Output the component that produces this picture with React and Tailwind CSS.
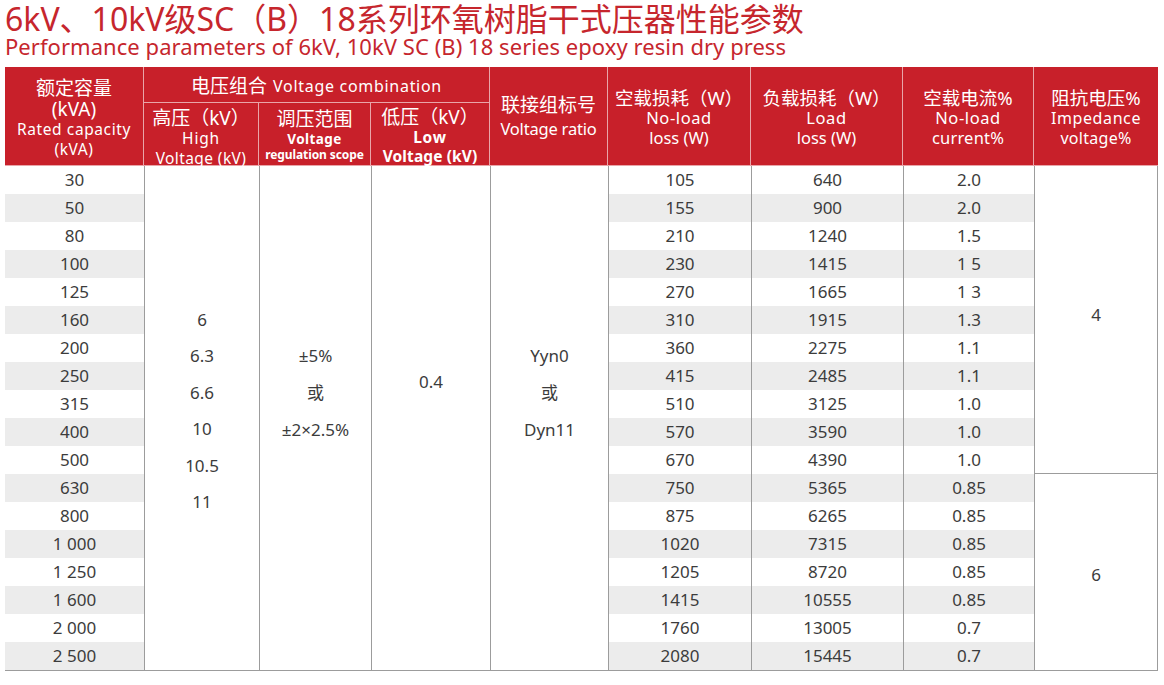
import React from 'react';

const rows = [
  ['30', '105', '640', '2.0'],
  ['50', '155', '900', '2.0'],
  ['80', '210', '1240', '1.5'],
  ['100', '230', '1415', '1 5'],
  ['125', '270', '1665', '1 3'],
  ['160', '310', '1915', '1.3'],
  ['200', '360', '2275', '1.1'],
  ['250', '415', '2485', '1.1'],
  ['315', '510', '3125', '1.0'],
  ['400', '570', '3590', '1.0'],
  ['500', '670', '4390', '1.0'],
  ['630', '750', '5365', '0.85'],
  ['800', '875', '6265', '0.85'],
  ['1 000', '1020', '7315', '0.85'],
  ['1 250', '1205', '8720', '0.85'],
  ['1 600', '1415', '10555', '0.85'],
  ['2 000', '1760', '13005', '0.7'],
  ['2 500', '2080', '15445', '0.7'],
];

const cjk = { fontFamily: '"Noto Sans", "Noto Sans CJK SC", sans-serif' };

// header cell shared look
const hd = 'flex flex-col items-center justify-center text-white text-center border-r border-b border-white/60 bg-[#c8202a]';

function Body({ kva, noLoad, load, cur, idx }) {
  const stripe = idx % 2 === 1 ? 'bg-[#ececec]' : 'bg-white';
  return (
    <>
      <div className={`${stripe} flex items-center justify-center`}>{kva}</div>
      {idx === 0 && (
        <>
          <div className="row-span-18 border-l border-[#9c9c9c] bg-white flex flex-col items-center justify-center pb-[14px] leading-[36.5px]">
            <span>6</span>
            <span>6.3</span>
            <span>6.6</span>
            <span>10</span>
            <span>10.5</span>
            <span>11</span>
          </div>
          <div className="row-span-18 border-l border-[#9c9c9c] bg-white flex flex-col items-center justify-center pb-[52px] leading-[37px]">
            <span>±5%</span>
            <span>或</span>
            <span>±2×2.5%</span>
          </div>
          <div className="row-span-18 border-l border-[#9c9c9c] bg-white flex items-center justify-center pb-[72px]">
            0.4
          </div>
          <div className="row-span-18 border-l border-[#9c9c9c] bg-white flex flex-col items-center justify-center pb-[52px] leading-[37px]">
            <span>Yyn0</span>
            <span>或</span>
            <span>Dyn11</span>
          </div>
        </>
      )}
      <div className={`${stripe} border-l border-[#9c9c9c] flex items-center justify-center`}>{noLoad}</div>
      <div className={`${stripe} border-l border-[#9c9c9c] flex items-center justify-center`}>{load}</div>
      <div className={`${stripe} border-l border-[#9c9c9c] flex items-center justify-center`}>{cur}</div>
      {idx === 0 && (
        <div className="row-span-11 border-l border-r border-b border-[#9c9c9c] bg-white flex items-center justify-center pb-[10px]">4</div>
      )}
      {idx === 11 && (
        <div className="row-span-7 border-l border-r border-[#9c9c9c] bg-white flex items-center justify-center pt-[6px]">6</div>
      )}
    </>
  );
}

export default function App() {
  return (
    <div className="w-[1164px] h-[685px] bg-white overflow-hidden" style={cjk}>
      <div className="pl-[5px] pt-[4px] text-[#c6262d]">
        <h1 className="text-[32px] leading-[29px]">6kV、10kV级SC（B）18系列环氧树脂干式压器性能参数</h1>
        <p className="text-[22px] leading-[26px] tracking-[0.05px]">Performance parameters of 6kV, 10kV SC (B) 18 series epoxy resin dry press</p>
      </div>

      <div className="ml-[5px] mt-[8px] w-[1153px] border-b border-[#9c9c9c]">
        <div className="grid grid-cols-[139px_115px_112px_119px_118px_143px_152px_131px_124px] grid-rows-[36px_63px_repeat(18,28px)] text-[17px] text-[#3c3c3c]">
          {/* header row */}
          <div className={`${hd} row-span-2 pt-[4px]`}>
            <span className="text-[19px] leading-[22px]">额定容量</span>
            <span className="text-[19px] leading-[20px]">(kVA)</span>
            <span className="text-[15.5px] leading-[20px] tracking-[0.6px]">Rated capacity</span>
            <span className="text-[15.5px] leading-[21px] tracking-[0.6px]">(kVA)</span>
          </div>
          <div className={`${hd} col-span-3 flex-row gap-[6px] pt-[3px]`}>
            <span className="text-[19px]">电压组合</span>
            <span className="text-[16px] tracking-[0.7px]">Voltage combination</span>
          </div>
          <div className={`${hd} row-span-2 leading-[23px] pt-[2px]`}>
            <span className="text-[19px]">联接组标号</span>
            <span className="text-[16.5px] tracking-[-0.2px]">Voltage ratio</span>
          </div>
          <div className={`${hd} row-span-2 leading-[20px] pt-[4px]`}>
            <span className="text-[18.5px]">空载损耗（W）</span>
            <span className="text-[16.5px] tracking-[0.6px]">No-load</span>
            <span className="text-[16.5px]">loss (W)</span>
          </div>
          <div className={`${hd} row-span-2 leading-[20px] pt-[4px]`}>
            <span className="text-[18.5px]">负载损耗（W）</span>
            <span className="text-[16.5px] tracking-[0.6px]">Load</span>
            <span className="text-[16.5px]">loss (W)</span>
          </div>
          <div className={`${hd} row-span-2 leading-[20px] pt-[4px]`}>
            <span className="text-[18.5px]">空载电流%</span>
            <span className="text-[16.5px] tracking-[0.6px]">No-load</span>
            <span className="text-[16.5px] tracking-[0.2px]">current%</span>
          </div>
          <div className={`${hd} row-span-2 leading-[20px] pt-[4px] border-r-0`}>
            <span className="text-[18.5px]">阻抗电压%</span>
            <span className="text-[16px] tracking-[0.6px]">Impedance</span>
            <span className="text-[16px] tracking-[0.3px]">voltage%</span>
          </div>
          {/* header sub row */}
          <div className={`${hd} leading-[19px] pt-[7px]`}>
            <span className="text-[19px] leading-[22px]">高压（kV）</span>
            <span className="text-[15.5px] tracking-[0.8px]">High</span>
            <span className="text-[15.5px] tracking-[0.4px] leading-[21px]">Voltage (kV)</span>
          </div>
          <div className={`${hd} leading-[16px] pt-[2px]`}>
            <span className="text-[19px] leading-[24px]">调压范围</span>
            <span className="text-[13.5px] font-bold tracking-[0.4px]">Voltage</span>
            <span className="text-[12px] font-bold whitespace-nowrap tracking-[-0.1px]">regulation scope</span>
          </div>
          <div className={`${hd} leading-[19px] pt-[3px]`}>
            <span className="text-[19px] leading-[22px]">低压（kV）</span>
            <span className="text-[15.5px] font-bold tracking-[0.8px]">Low</span>
            <span className="text-[15.5px] font-bold tracking-[0.1px]">Voltage (kV)</span>
          </div>

          {rows.map((r, i) => (
            <Body key={i} idx={i} kva={r[0]} noLoad={r[1]} load={r[2]} cur={r[3]} />
          ))}
        </div>
      </div>
    </div>
  );
}
